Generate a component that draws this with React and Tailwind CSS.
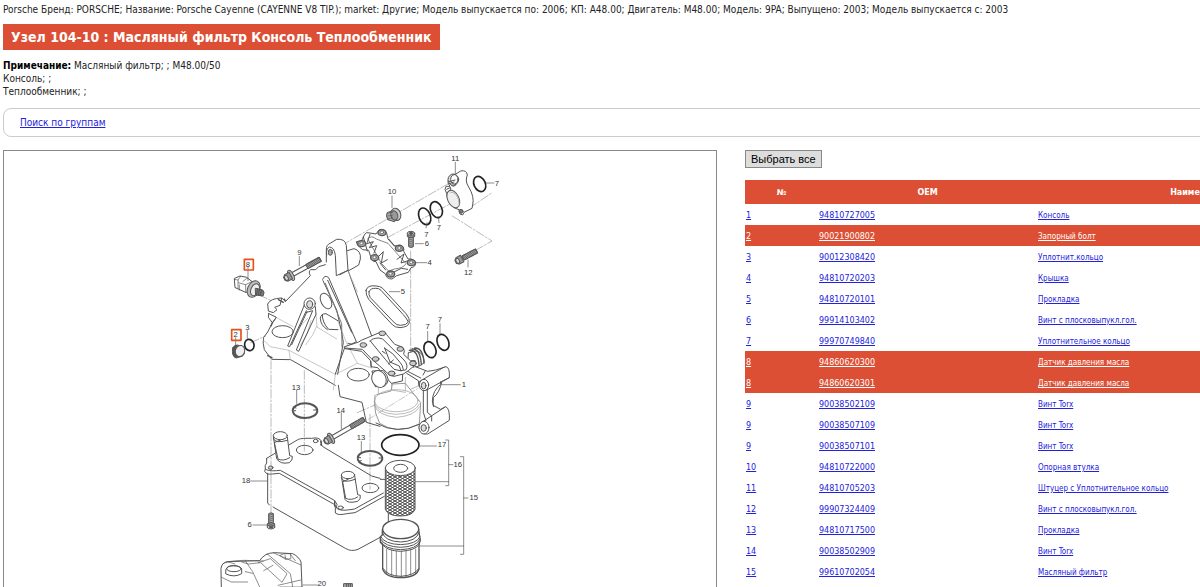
const parts = [
    { no: '1', oem: '94810727005', name: 'Консоль' },
    { no: '2', oem: '90021900802', name: 'Запорный болт', selected: true },
    { no: '3', oem: '90012308420', name: 'Уплотнит.кольцо' },
    { no: '4', oem: '94810720203', name: 'Крышка' },
    { no: '5', oem: '94810720101', name: 'Прокладка' },
    { no: '6', oem: '99914103402', name: 'Винт с плосковыпукл.гол.' },
    { no: '7', oem: '99970749840', name: 'Уплотнительное кольцо' },
    { no: '8', oem: '94860620300', name: 'Датчик давления масла', selected: true },
    { no: '8', oem: '94860620301', name: 'Датчик давления масла', selected: true },
    { no: '9', oem: '90038502109', name: 'Винт Torx' },
    { no: '9', oem: '90038507109', name: 'Винт Torx' },
    { no: '9', oem: '90038507101', name: 'Винт Torx' },
    { no: '10', oem: '94810722000', name: 'Опорная втулка' },
    { no: '11', oem: '94810705203', name: 'Штуцер с Уплотнительное кольцо' },
    { no: '12', oem: '99907324409', name: 'Винт с плосковыпукл.гол.' },
    { no: '13', oem: '94810717500', name: 'Прокладка' },
    { no: '14', oem: '90038502909', name: 'Винт Torx' },
    { no: '15', oem: '99610702054', name: 'Масляный фильтр' }
];

// callout numbers, in drawing units
const labels = [
    ['11', 1354, 29], ['7', 1479, 104], ['10', 1164, 130], ['7', 1267, 257], ['7', 1305, 238],
    ['6', 1269, 286], ['4', 1277, 343], ['12', 1393, 371], ['9', 886, 312], ['8', 732, 347],
    ['2', 695, 559], ['3', 730, 536], ['5', 1197, 429], ['7', 1271, 535], ['7', 1308, 514],
    ['1', 1380, 709], ['13', 876, 716], ['14', 1010, 785], ['13', 1071, 868], ['17', 1314, 888],
    ['16', 1361, 947], ['15', 1409, 1046], ['18', 726, 997], ['6', 737, 1129], ['20', 953, 1306]
];

function Bolt({ x, y, angle, length, flange = true }) {
    const threads = [];
    for (let i = length - 44; i < length; i += 5) threads.push(i);
    return (
        <g transform={`translate(${x} ${y}) rotate(${angle})`}>
            <rect x="8" y="-6" width={length - 8} height="12" fill="#fff" />
            <rect x={length - 46} y="-7" width="46" height="14" rx="2" fill="#999" />
            {threads.map((i) => (
                <path key={i} d={`M${i}-7l4 14`} strokeWidth="2" />
            ))}
            {flange && <ellipse cx="6" cy="0" rx="7" ry="17" fill="#bbb" />}
            <path d="M5-11H-10L-17-5V5L-10 11H5Z" fill="#999" />
            <ellipse cx="-10" cy="0" rx="5" ry="8" fill="#ddd" />
        </g>
    );
}

function Screw({ x, y, flip }) {
    return (
        <g transform={`translate(${x} ${y}) scale(1 ${flip ? -1 : 1})`}>
            <path d="M-7 8V38Q0 43 7 38V8Z" fill="#aaa" />
            <path d="M-7 15l14 4M-7 21l14 4M-7 27l14 4M-7 33l14 4" strokeWidth="2" />
            <path d="M-11-2V8Q0 15 11 8V-2Z" fill="#888" />
            <ellipse cx="0" cy="-2" rx="11" ry="6" fill="#ddd" />
            <ellipse cx="0" cy="-2" rx="5" ry="3" fill="#555" />
        </g>
    );
}

function Diagram() {
    return (
        <svg viewBox="0 0 2136 1500" className="block w-full" fill="none" stroke="#555" strokeWidth="3" strokeLinejoin="round" strokeLinecap="round">
            <defs>
                <pattern id="mesh" width="15" height="18" patternUnits="userSpaceOnUse">
                    <rect width="15" height="18" fill="#fff" stroke="none" />
                    <path d="M0 0L15 9L0 18M15 0L0 9L15 18" stroke="#444" strokeWidth="3" />
                </pattern>
            </defs>

            {/* axis lines */}
            <g stroke="#999" strokeWidth="2" strokeDasharray="26 6 5 6">
                <path d="M975 305L1335 97M1150 260L1345 155M1395 172L1466 124M1345 195L1464 270L1390 312" />
                <path d="M1220 300V640M801 629V1090M901 659V900M1098 790V1015M765 432L800 448M740 575L785 555M1060 785L1265 695" />
            </g>

            {/* pipe connection with its seals */}
            <g transform="translate(1068 -18)">
                <path d="M265 105Q268 88 286 88L302 78Q320 74 322 90Q314 108 326 126Q344 155 338 180L336 190L312 202L308 210L300 207L297 194L284 189Q262 172 260 145L255 134L258 124H270Q260 113 265 105Z" fill="#fff" />
                <ellipse cx="280" cy="104" rx="16" ry="17" fill="#ddd" />
                <ellipse cx="283" cy="103" rx="11" ry="14" fill="#fff" />
                <path d="M267 110L285 105M268 116L282 111M260 133L272 127V137M275 122Q287 128 287 116" />
                <ellipse cx="280" cy="162" rx="17" ry="28" transform="rotate(-25 280 162)" fill="#eee" />
                <path d="M270 141Q295 140 298 179" strokeWidth="2" stroke="#999" />
                <circle cx="303" cy="199" r="6" fill="#777" />
                <g strokeWidth="5" stroke="#222">
                    <ellipse cx="359" cy="117" rx="17" ry="24" transform="rotate(-25 359 117)" />
                    <ellipse cx="194" cy="214" rx="17" ry="26" transform="rotate(-22 194 214)" />
                    <ellipse cx="229" cy="194" rx="17" ry="25" transform="rotate(-22 229 194)" />
                </g>
                <path d="M286 52V88M379 114H402M96 153V188M201 233L198 249M235 215L237 233M166 296H190M166 353H200M324 345V366" strokeWidth="2" />
                {/* bushing */}
                <path d="M81 204Q77 212 83 224L103 230L115 220L105 196Z" fill="#aaa" />
                <ellipse cx="108" cy="208" rx="14" ry="19" transform="rotate(-20 108 208)" fill="#ccc" />
                <ellipse cx="103" cy="211" rx="10" ry="14" transform="rotate(-20 103 211)" fill="#999" />
                <path d="M83 205L98 201M83 213L97 211M84 221L97 219" strokeWidth="2" />
            </g>
            <Screw x="1221" y="249" />

            {/* cover */}
            <g transform="translate(1068 -18)">
                <path d="M-10 290L5 287L14 268Q18 260 30 264L48 267L58 254Q74 250 80 265L84 282L103 303L120 300Q134 305 131 319L144 342Q160 340 167 352Q168 366 153 368L145 382L110 392L96 402Q78 402 77 387L60 375L48 350Q34 350 32 335L26 316L8 314L-6 302Z" fill="#fff" strokeWidth="3" />
                <path d="M24 280Q35 270 49 282L84 295L138 356Q130 370 103 372L86 378L65 356Z" fill="#fff" stroke="#888" />
                <path d="M14 298L40 290L28 308L50 302L42 324M50 340L70 320L64 354L82 344M111 343L132 327L123 354L145 347M30 268L22 292M98 383L124 370L143 373M10 276L22 318M87 283L105 304M60 354L77 375" strokeWidth="3" />
                {[[66, 263], [5, 296], [44, 338], [118, 310], [154, 353], [92, 387]].map(([x, y]) => (
                    <g key={x}>
                        <ellipse cx={x} cy={y} rx="12" ry="9" fill="#aaa" strokeWidth="4" />
                        <ellipse cx={x} cy={y - 1} rx="5" ry="4" fill="#fff" strokeWidth="2" />
                    </g>
                ))}
            </g>
            <Bolt x="1370" y="325" angle={-28} length={54} flange={false} />
            <Bolt x="856" y="376" angle={-29} length={106} />

            {/* bracket, left side */}
            <g transform="translate(648 237)">
                <path d="M382 62L402 56Q424 62 421 87L416 105L386 122" fill="#fff" />
                <path d="M319 96V60Q318 44 332 39L350 28Q376 25 379 47L384 121L349 137L346 76Q343 51 328 51Q317 57 320 75" fill="#fff" />
                <ellipse cx="331" cy="67" rx="6" ry="9" fill="#aaa" />
                <path d="M316 104L296 110L287 119H272Q264 124 271 137L197 214L185 204Q151 205 143 222L145 243L160 248L171 239L164 232L180 226L185 205M146 250L145 262L157 278L169 262L147 251M169 262L154 284L143 306L131 322Q127 338 133 359L155 388L212 389L346 466M384 121L455 318" />
                <path d="M196 214L193 207M157 278L153 288M143 377L156 383M175 209L190 217" strokeWidth="4" />
                <g stroke="#aaa" strokeWidth="2">
                    <path d="M170 263L219 290M130 330L151 350L207 361L346 433L340 480M207 361L211 389M273 272L262 310L242 345M288 250L291 290M350 327L289 290L278 315L257 344M354 275L380 339L412 400L346 433M412 400L455 414M384 123L412 185M240 290L263 265" />
                </g>
                <path d="M308 148Q313 133 326 143L409 335L374 353L346 432M309 152L350 240L364 302L370 337L353 433M323 151L395 307M384 340L455 357M384 121L360 134" />
                <path d="M316 160L365 281L366 350" stroke="#777" />
                <circle cx="269" cy="221" r="17" fill="#fff" />
                <ellipse cx="269" cy="223" rx="9" ry="11" fill="#ddd" />
                <path d="M253 225L203 348L209 350L259 242M286 230L288 253L236 364L229 360L278 242L260 247M215 344L261 245" />
                <ellipse cx="318" cy="213" rx="15" ry="25" transform="rotate(-27 318 213)" />
                <path d="M355 273L318 251Q302 251 301 266Q302 286 322 299M307 253Q306 277 326 298L354 299" />
                <ellipse cx="188" cy="305" rx="32" ry="18" />
                <ellipse cx="415" cy="434" rx="33" ry="19" />
            </g>

            {/* bracket, right side */}
            <g transform="translate(1008 357)">
                <path d="M105 375Q101 400 107 430L119 460Q172 496 238 462L242 398L196 340L157 342L153 363L110 374" fill="#fff" stroke="#999" />
                <path d="M-5 346L0 380L66 397L79 457L120 469" />
                <ellipse cx="169" cy="392" rx="65" ry="33" stroke="#999" strokeWidth="2" />
                <path d="M102 395Q108 430 168 433Q225 431 238 402M103 405Q112 437 170 442Q226 437 239 410M115 370V348M196 322V362M155 340V360L196 367" stroke="#999" strokeWidth="2" />
                <path d="M108 459Q170 496 238 463" />
                <path d="M228 243Q250 245 253 276Q245 289 220 292L203 285L205 249Z" fill="#fff" />
                <g strokeWidth="4">
                    <path d="M208 241Q234 238 237 286M216 237Q241 235 244 284M224 234Q250 233 252 280" />
                </g>
                <path d="M226 290L263 304L287 300L318 290Q330 292 328 323L306 334Q298 369 280 383L279 406L302 418L317 410Q330 415 328 451L263 492Q239 495 237 470L245 456L258 452L250 427V362L238 350L235 332L200 310" fill="#fff" />
                <path d="M244 331L313 291M244 331Q235 333 237 347Q244 365 260 360L328 323M245 457L315 411M262 359V427L275 438V453M302 335L302 343Q278 362 277 393L281 410M203 304L242 324M255 304L249 315" />
                <ellipse cx="252" cy="345" rx="14" ry="17" fill="#fff" />
                <ellipse cx="251" cy="347" rx="7" ry="10" fill="#ddd" />
                <ellipse cx="252" cy="473" rx="15" ry="19" fill="#fff" />
                <ellipse cx="251" cy="474" rx="8" ry="10" fill="#ddd" />
                <path d="M93 275V290L113 293L154 340L187 333L188 313" fill="#fff" />
                <path d="M97 303L130 302Q157 330 133 349L107 350Z" fill="#fff" />
                <ellipse cx="117" cy="327" rx="21" ry="26" transform="rotate(-25 117 327)" fill="#fff" />
                <path d="M14 230L56 216L64 211L118 188Q133 180 140 194L164 223L187 231Q197 242 191 253L211 272H226Q232 286 218 291L205 302L190 312L162 319Q147 318 142 309L119 288L105 276L92 264L67 238L14 234Z" fill="#fff" />
                <path d="M15 236L65 244L91 271L94 291M91 213Q96 204 117 204L128 207L192 270Q207 287 197 300Q181 305 162 298Q145 280 91 213Z" />
                <path d="M134 234L150 276L178 288L183 303M133 234L158 251L180 277Q188 285 190 298M136 250L127 244M145 282L160 270" />
                {[[70, 225], [127, 190], [181, 237], [107, 267], [155, 310], [219, 280]].map(([x, y]) => (
                    <ellipse key={x} cx={x} cy={y} rx="10" ry="7" fill="#ccc" />
                ))}
                <path d="M78 61Q82 44 108 48Q120 48 128 55L199 132Q210 145 208 158Q205 171 180 173Q164 172 158 165L86 88Q77 75 78 61ZM87 65Q91 54 107 55Q116 54 123 61L190 134Q199 143 205 156Q199 166 181 166Q169 165 164 159L91 83Q85 74 87 65Z" />
                <g strokeWidth="5" stroke="#222">
                    <ellipse cx="270" cy="239" rx="17" ry="25" transform="rotate(-22 270 239)" />
                    <ellipse cx="309" cy="217" rx="17" ry="25" transform="rotate(-22 309 217)" />
                </g>
                <path d="M148 65H180M263 184V213M300 161V192M306 344H361" strokeWidth="2" />
                <path d="M85 448L242 350" stroke="#aaa" strokeWidth="2" strokeDasharray="20 6 4 6" />
            </g>

            {/* sensor, plug and its ring */}
            <g transform="translate(648 237)">
                <path d="M44 145L60 138L80 142L99 157L99 183L77 187L46 173Z" fill="#fff" strokeWidth="3" />
                <path d="M62 139L54 150V175M54 150L43 148M55 158L77 164L95 155M77 164V187M82 144L69 154M58 165V180" strokeWidth="2" />
                <ellipse cx="101" cy="177" rx="18" ry="26" transform="rotate(25 101 177)" fill="#bbb" />
                <ellipse cx="105" cy="179" rx="12" ry="19" transform="rotate(25 105 179)" fill="#eee" />
                <path d="M107 175L128 180Q136 186 129 198L108 195Z" fill="#777" />
                <path d="M113 176L109 195M119 177L115 196M125 180L120 197" />
                <path d="M38 354Q44 341 60 347L71 354Q78 372 66 379L48 384Q34 379 38 354Z" fill="#555" />
                <ellipse cx="60" cy="363" rx="14" ry="17" transform="rotate(15 60 363)" fill="#eee" />
                <ellipse cx="88" cy="345" rx="14" ry="17" strokeWidth="5" stroke="#222" transform="rotate(-15 88 345)" />
                <path d="M238 79V107M84 111V152M47 323V347M82 302V326" strokeWidth="2" />
            </g>

            {/* heat exchanger plate */}
            <g transform="translate(648 657)">
                <path d="M143 310V399L148 405M159 411L376 535Q394 546 414 538L486 499M302 224L312 232L455 318L480 325" />
                <path d="M140 265L165 250L235 208Q245 204 275 205Q297 200 305 214L303 226M140 265V279Q133 285 136 297L134 304Q140 315 157 312L178 310L346 405V429Q355 437 380 431L405 428L493 379M136 297Q143 304 170 302L181 301L343 391L351 403L349 414Q359 423 383 420L404 417L490 369" />
                <path d="M305 226L302 214M344 393V408" strokeWidth="4" />
                <ellipse cx="254" cy="240" rx="25" ry="14" />
                <ellipse cx="451" cy="354" rx="25" ry="14" />
                <ellipse cx="287" cy="213" rx="7" ry="5" />
                <ellipse cx="152" cy="293" rx="7" ry="5" fill="#ccc" />
                <ellipse cx="362" cy="413" rx="8" ry="5" />
                <path d="M160 199L170 266Q180 284 208 278Q219 271 217 259L209 257L202 201L163 218L174 267Q190 275 209 263" fill="#fff" />
                <ellipse cx="181" cy="197" rx="21" ry="12" fill="#fff" />
                <path d="M160 206Q165 222 202 211" />
                <path d="M364 317L375 388Q382 402 413 394Q423 388 421 376L413 374L404 317L368 336L377 385Q394 393 413 381" fill="#fff" />
                <ellipse cx="384" cy="315" rx="20" ry="11" fill="#fff" />
                <path d="M364 324Q370 342 405 328" />
                <ellipse cx="255" cy="122" rx="37" ry="22" strokeWidth="6" strokeDasharray="90 5" />
                <ellipse cx="450" cy="265" rx="37" ry="22" strokeWidth="6" strokeDasharray="90 5" />
                <path d="M220 111L228 114M219 123L227 122M291 120H281M413 263H422M416 274L424 272M484 264H477" />
                <path d="M230 61V100M364 128V176M424 214V247M92 333H143M99 465H141" strokeWidth="2" />
            </g>
            <Bolt x="976" y="865" angle={-30} length={120} />
            <Screw x="801" y="1126" flip />

            {/* filter element and bowl */}
            <g transform="translate(1038 807)">
                <path d="M115 280V310M91 178H105" />
                <path d="M106 143V268Q114 288 151 288Q188 288 195 268V143Z" fill="url(#mesh)" />
                <ellipse cx="151" cy="144" rx="45" ry="23" fill="#fff" />
                <ellipse cx="152" cy="145" rx="21" ry="12" fill="#fff" />
                <ellipse cx="151" cy="75" rx="56" ry="31" strokeWidth="5" stroke="#222" />
                <path d="M97 329V345L91 350V367L98 374V447Q107 473 152 473Q200 472 207 447V374L211 360L208 343L206 328Z" fill="#fff" strokeWidth="4" />
                <ellipse cx="152" cy="327" rx="54" ry="29" fill="#fff" strokeWidth="4" />
                <path d="M97 337Q103 364 152 366Q199 364 207 338M92 350Q103 372 152 374Q201 372 210 350M92 357Q103 380 152 382Q201 380 210 357M93 365Q104 387 152 389Q200 387 209 366M99 375Q109 392 152 394Q197 391 207 374" />
                <path d="M110 388V460M125 391V466M139 394V469M154 394V470M168 393V469M182 391V466M197 387V459" strokeWidth="2" />
                <path d="M100 446Q112 468 153 469Q194 466 206 446" />
                <path d="M210 78H260M197 185H296M287 60H296V197H287M296 134H309M209 378H341M331 110H341V403H331M341 234H354" strokeWidth="2" />
            </g>

            {/* oil can */}
            <g transform="translate(648 657)">
                <path d="M3 595Q5 578 22 575L119 572Q133 549 163 548L218 551Q237 560 243 576L248 699H6Z" fill="#fff" />
                <path d="M18 598Q22 587 40 587Q60 588 65 597V611Q43 624 18 612Z" fill="#fff" />
                <ellipse cx="42" cy="596" rx="22" ry="9" />
                <path d="M9 581Q22 572 74 571L130 573M75 571L98 605L119 651M65 576L85 582L122 578L186 637L201 611L151 566L115 578M76 605L98 610M141 551L211 611L218 650M161 549L243 585M180 556L193 551H211L213 566L198 568ZM195 555L197 567M5 622L34 636H83M131 602L159 586M22 575L45 582M212 554L226 572M174 646L242 630M180 651H247" strokeWidth="2" />
                <path d="M249 645H292" strokeWidth="2" />
                <path d="M372 641H397V699H372Z" fill="#aaa" />
                <path d="M379 641V651M385 641V651M391 641V651" />
            </g>

            {/* highlighted callouts */}
            <g stroke="#e8501c" strokeWidth="5">
                <rect x="721" y="325" width="27" height="32" />
                <rect x="683" y="536" width="28" height="32" />
            </g>
            <g fill="#333" stroke="none" fontSize="23" textAnchor="middle" className="font-['Liberation_Sans',Arial,sans-serif]">
                {labels.map(([text, x, y]) => (
                    <text key={`${x}-${y}`} x={x} y={y}>{text}</text>
                ))}
            </g>
        </svg>
    );
}

export default function App() {
    return (
        <div className="h-screen overflow-hidden bg-white pl-[3px] pt-[3px] font-['DejaVu_Sans_Condensed','DejaVu_Sans',sans-serif] text-[10px] leading-[13px] text-[#222]">
            <p className="whitespace-nowrap">
                Porsche Бренд: PORSCHE; Название: Porsche Cayenne (CAYENNE V8 TIP.); market: Другие; Модель выпускается по: 2006; КП: A48.00; Двигатель: M48.00; Модель: 9PA; Выпущено: 2003; Модель выпускается с: 2003
            </p>
            <h1 className="mt-2 w-fit whitespace-nowrap bg-[#dc4f34] px-2 py-1 text-[14px] font-bold leading-[18px] text-white">
                Узел 104-10 : Масляный фильтр Консоль Теплообменник
            </h1>
            <p className="mt-[9px]">
                <b className="text-black">Примечание:</b> Масляный фильтр; ; M48.00/50<br />
                Консоль; ;<br />
                Теплообменник; ;
            </p>
            <nav className="-mr-3 mt-[10px] rounded-lg border border-[#ccc] px-4 py-[7px]">
                <a href="#groups" className="text-[#2222dd] underline">Поиск по группам</a>
            </nav>
            <div className="mt-[13px] flex items-start">
                <div className="w-[714px] shrink-0 border border-[#888]">
                    <Diagram />
                </div>
                <div className="ml-7 min-w-0 flex-1">
                    <button type="button" className="block border border-[#888] bg-[#ddd] px-[5px] font-['Liberation_Sans',Arial,sans-serif] text-[11px] leading-4 text-black">
                        Выбрать все
                    </button>
                    <table className="mt-3 w-[626px] table-fixed border-collapse font-['DejaVu_Sans',sans-serif] text-[8px] leading-[13px]">
                        <thead>
                            <tr className="h-6 bg-[#dc4f34] font-bold text-white">
                                <th className="w-[73px]">№</th>
                                <th className="w-[219px]">OEM</th>
                                <th>Наименование</th>
                            </tr>
                        </thead>
                        <tbody>
                            {parts.map((part) => (
                                <tr key={part.oem} className={part.selected ? 'bg-[#dc4f34] text-white' : 'text-[#2222dd]'}>
                                    <td className="px-px pb-[3px] pt-[5px]"><a href={`#${part.oem}`} className="underline">{part.no}</a></td>
                                    <td className="px-px pb-[3px] pt-[5px]"><a href={`#${part.oem}`} className="underline">{part.oem}</a></td>
                                    <td className="px-px pb-[3px] pt-[5px] font-['DejaVu_Sans_Condensed','DejaVu_Sans',sans-serif]"><a href={`#${part.oem}`} className="underline">{part.name}</a></td>
                                </tr>
                            ))}
                        </tbody>
                    </table>
                </div>
            </div>
        </div>
    );
}
